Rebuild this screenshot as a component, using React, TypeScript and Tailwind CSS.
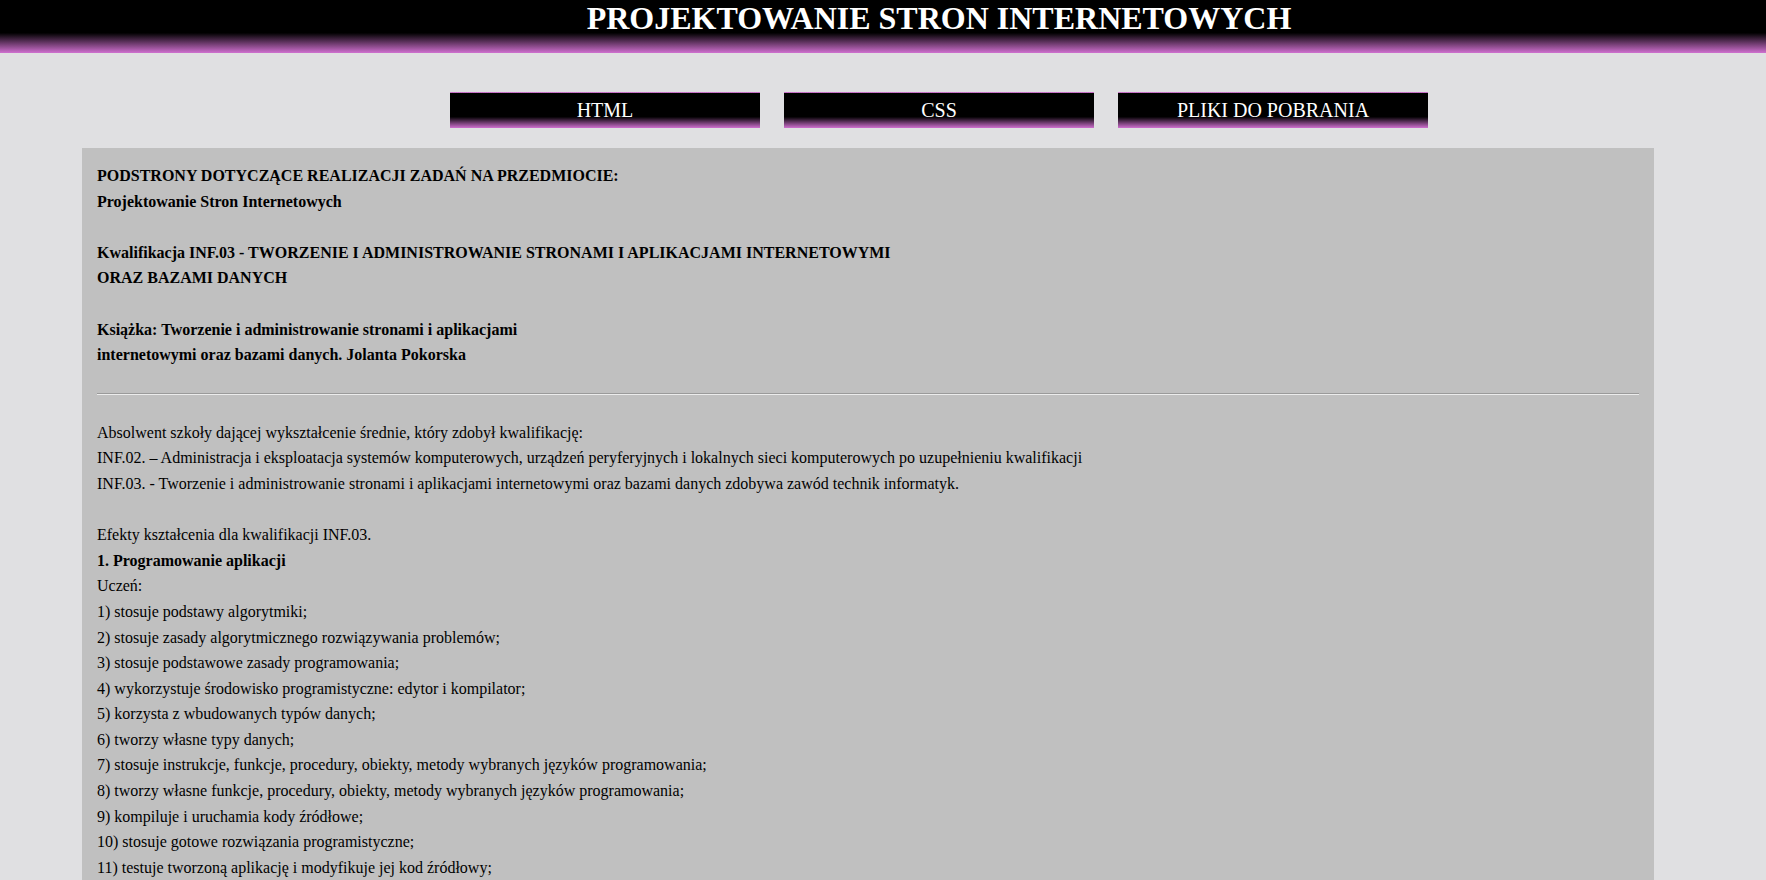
import React from 'react';

const navItems = ['HTML', 'CSS', 'PLIKI DO POBRANIA'];

const efekty = [
  '1) stosuje podstawy algorytmiki;',
  '2) stosuje zasady algorytmicznego rozwiązywania problemów;',
  '3) stosuje podstawowe zasady programowania;',
  '4) wykorzystuje środowisko programistyczne: edytor i kompilator;',
  '5) korzysta z wbudowanych typów danych;',
  '6) tworzy własne typy danych;',
  '7) stosuje instrukcje, funkcje, procedury, obiekty, metody wybranych języków programowania;',
  '8) tworzy własne funkcje, procedury, obiekty, metody wybranych języków programowania;',
  '9) kompiluje i uruchamia kody źródłowe;',
  '10) stosuje gotowe rozwiązania programistyczne;',
  '11) testuje tworzoną aplikację i modyfikuje jej kod źródłowy;',
  '12) dokumentuje tworzoną aplikację.',
];

export default function App() {
  return (
    <div className="min-h-screen bg-[#e0e0e2] font-['Liberation_Serif','Times_New_Roman',serif] text-black">
      {/* naglowek */}
      <header className="h-[53px] bg-[linear-gradient(to_bottom,#000_62%,#d070d0)] pl-[112px] pt-px text-center">
        <h1 className="text-[32px] font-bold leading-[35px] text-white">PROJEKTOWANIE STRON INTERNETOWYCH</h1>
      </header>

      {/* menu */}
      <nav className="mt-[39px] flex justify-center gap-6 pl-[112px]">
        {navItems.map((item) => (
          <a
            key={item}
            href="#"
            className="block h-[36px] w-[310px] border-t border-dotted border-[#c77ac7] bg-[linear-gradient(to_bottom,#000_68%,#d070d0)] text-center text-[20px] leading-[35px] text-white"
          >
            {item}
          </a>
        ))}
      </nav>

      {/* tresc */}
      <main className="ml-[82px] mt-[20px] w-[1572px] bg-[#c0c0c0] pb-8 pl-[15px] pr-[15px] pt-[15px] text-[16px] leading-[25.6px]">
        <div className="font-bold">
          <p>PODSTRONY DOTYCZĄCE REALIZACJI ZADAŃ NA PRZEDMIOCIE:</p>
          <p>Projektowanie Stron Internetowych</p>
          <br />
          <p>Kwalifikacja INF.03 - TWORZENIE I ADMINISTROWANIE STRONAMI I APLIKACJAMI INTERNETOWYMI</p>
          <p>ORAZ BAZAMI DANYCH</p>
          <br />
          <p>Książka: Tworzenie i administrowanie stronami i aplikacjami</p>
          <p>internetowymi oraz bazami danych. Jolanta Pokorska</p>
        </div>

        <hr className="mb-[25px] mt-[25px] border-t border-b border-t-[#9a9a9a] border-b-[#ececec]" />

        <p>Absolwent szkoły dającej wykształcenie średnie, który zdobył kwalifikację:</p>
        <p>
          INF.02. – Administracja i eksploatacja systemów komputerowych, urządzeń peryferyjnych i lokalnych sieci
          komputerowych po uzupełnieniu kwalifikacji
        </p>
        <p>
          INF.03. - Tworzenie i administrowanie stronami i aplikacjami internetowymi oraz bazami danych zdobywa zawód
          technik informatyk.
        </p>
        <br />
        <p>Efekty kształcenia dla kwalifikacji INF.03.</p>
        <p className="font-bold">1. Programowanie aplikacji</p>
        <p>Uczeń:</p>
        {efekty.map((e) => (
          <p key={e}>{e}</p>
        ))}
      </main>
    </div>
  );
}
